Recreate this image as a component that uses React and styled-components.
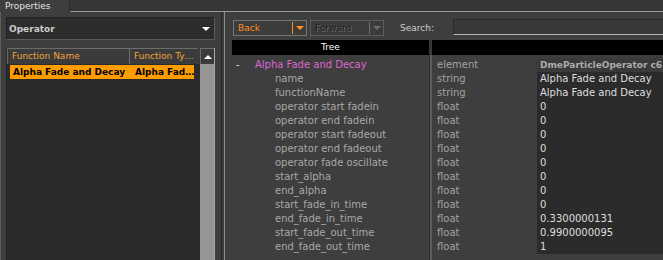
import React from "react";
import styled, { createGlobalStyle } from "styled-components";

const GlobalStyle = createGlobalStyle`
  html, body {
    margin: 0;
    padding: 0;
  }
  body {
    background: #3e3e3e;
    font-family: "DejaVu Sans", "Liberation Sans", sans-serif;
    font-size: 10px;
    overflow: hidden;
  }
`;

const Window = styled.div`
  width: 663px;
  height: 260px;
  display: flex;
  flex-direction: column;
  overflow: hidden;
  background: #3e3e3e;
`;

const TabBar = styled.div`
  display: flex;
  height: 12px;
  flex-shrink: 0;
  background: #363636;
`;

const Tab = styled.div`
  width: 70px;
  height: 12px;
  box-sizing: border-box;
  padding-left: 5px;
  border-right: 1px solid #2a2a2a;
  background: #3e3e3e;
  color: #e2e2e2;
  font-size: 9px;
  line-height: 12px;
`;

const TabFill = styled.div`
  flex: 1;
  border-bottom: 1px solid #9a9a9a;
`;

const Main = styled.div`
  flex: 1;
  display: flex;
  gap: 2px;
  min-height: 0;
`;

const LeftPanel = styled.div`
  width: 222px;
  box-sizing: border-box;
  display: flex;
  flex-direction: column;
  padding: 5px 6px 0 5px;
  border-left: 1px solid #5e5e5e;
  border-right: 1px solid #242424;
`;

const Dropdown = styled.div`
  height: 23px;
  box-sizing: border-box;
  display: flex;
  align-items: center;
  justify-content: space-between;
  padding: 0 4px 0 2px;
  border: 1px solid;
  border-color: #222 #5a5a5a #5a5a5a #222;
  background: #2d2d2d;
  color: #cbcbcb;
  font-size: 9px;
  font-weight: bold;
`;

const Caret = styled.span`
  width: 0;
  height: 0;
  border-left: 4px solid transparent;
  border-right: 4px solid transparent;
  border-top: 4px solid ${(p) => p.$color || "#fff"};
`;

const CaretUp = styled.span`
  width: 0;
  height: 0;
  border-left: 4px solid transparent;
  border-right: 4px solid transparent;
  border-bottom: 4px solid #fff;
`;

const ListBox = styled.div`
  flex: 1;
  margin-top: 8px;
  display: flex;
  border-left: 1px solid #262626;
  border-right: 1px solid #a8a8a8;
  background: #2b2b2b;
`;

const ListMain = styled.div`
  flex: 1;
  display: flex;
  flex-direction: column;
`;

const ListHeader = styled.div`
  display: flex;
  height: 16px;
  background: #3b3b3b;
`;

const HeaderCell = styled.div`
  width: ${(p) => p.$width}px;
  box-sizing: border-box;
  padding-left: 4px;
  border-left: 1px solid #6c6c6c;
  border-top: 1px solid #6c6c6c;
  color: #f0a23a;
  font-size: 9px;
  line-height: 15px;
  white-space: nowrap;
  overflow: hidden;
`;

const SelectedRow = styled.div`
  display: flex;
  height: 14px;
  margin: 1px 6px 0 3px;
  background: #ff9c00;
  color: #000;
  font-size: 9px;
  font-weight: bold;
  line-height: 14px;
`;

const RowCell = styled.div`
  width: ${(p) => (p.$width ? `${p.$width}px` : "auto")};
  flex: ${(p) => (p.$width ? "none" : 1)};
  box-sizing: border-box;
  padding-left: ${(p) => p.$pad}px;
  white-space: nowrap;
  overflow: hidden;
`;

const ScrollBar = styled.div`
  width: 16px;
  display: flex;
  flex-direction: column;
`;

const ScrollButton = styled.div`
  height: 16px;
  box-sizing: border-box;
  display: flex;
  align-items: center;
  justify-content: center;
  border-left: 1px solid #6c6c6c;
  border-top: 1px solid #6c6c6c;
  background: #3a3a3a;
`;

const ScrollTrack = styled.div`
  flex: 1;
  background: #959595;
`;

const RightPanel = styled.div`
  flex: 1;
  display: flex;
  flex-direction: column;
  border-left: 1px solid #8c8c8c;
  min-width: 0;
`;

const Toolbar = styled.div`
  height: 28px;
  box-sizing: border-box;
  display: flex;
  align-items: flex-start;
  padding: 8px 0 0 8px;
`;

const Combo = styled.div`
  width: 74px;
  height: 16px;
  box-sizing: border-box;
  display: flex;
  align-items: center;
  margin-left: ${(p) => (p.$first ? 0 : 3)}px;
  border: 1px solid ${(p) => (p.$disabled ? "#5c5c5c" : "#767676")};
  background: #3c3c3c;
`;

const ComboLabel = styled.span`
  flex: 1;
  padding-left: 4px;
  font-size: 9px;
  line-height: 14px;
  color: ${(p) => (p.$disabled ? "#1e1e1e" : "#ff8f1f")};
  text-shadow: ${(p) => (p.$disabled ? "1px 1px 0 #6a6a6a" : "none")};
`;

const ComboDivider = styled.span`
  width: 1px;
  height: 12px;
  background: ${(p) => (p.$disabled ? "#707070" : "#ff8f1f")};
`;

const ComboArrow = styled.span`
  width: 13px;
  display: flex;
  justify-content: center;
`;

const SearchLabel = styled.span`
  margin-left: 16px;
  color: #cdcdcd;
  font-size: 9px;
  line-height: 16px;
`;

const SearchInput = styled.div`
  flex: 1;
  height: 16px;
  box-sizing: border-box;
  margin: -1px 0 0 19px;
  border-top: 1px solid #2a2a2a;
  border-left: 1px solid #2a2a2a;
  border-bottom: 1px solid #b4b4b4;
  background: #383838;
`;

const Table = styled.div`
  flex: 1;
  display: flex;
  flex-direction: column;
  margin-left: 7px;
  min-height: 0;
`;

const TableHeader = styled.div`
  display: flex;
  height: 15px;
  flex-shrink: 0;
`;

const HeaderBlock = styled.div`
  width: ${(p) => (p.$width ? `${p.$width}px` : "auto")};
  flex: ${(p) => (p.$width ? "none" : 1)};
  background: #000;
  color: #fff;
  font-size: 9px;
  line-height: 15px;
  text-align: center;
`;

const HeaderGap = styled.div`
  width: 3px;
  background: #383838;
`;

const TableBody = styled.div`
  flex: 1;
  display: flex;
`;

const TreeColumn = styled.div`
  width: 197px;
  padding-top: 3px;
`;

const ColumnRule = styled.div`
  width: 2px;
  border-left: 1px solid #303030;
  background: #5c5c5c;
`;

const TreeRow = styled.div`
  height: 14px;
  display: flex;
  align-items: center;
  padding-left: ${(p) => p.$indent}px;
  line-height: 14px;
  white-space: nowrap;
  color: ${(p) => (p.$root ? "#de66d4" : "#a8a8a8")};
`;

const Expander = styled.span`
  width: 19px;
  color: #d8d8d8;
`;

const DataColumn = styled.div`
  flex: 1;
  display: grid;
  grid-template-columns: 105px 1fr;
  grid-auto-rows: 14px;
  align-content: start;
  padding-top: 3px;
  min-width: 0;
`;

const TypeCell = styled.div`
  padding-left: 5px;
  color: #a2a2a2;
  line-height: 14px;
  white-space: nowrap;
`;

const ValueCell = styled.div`
  padding-left: 3px;
  line-height: 14px;
  white-space: nowrap;
  overflow: hidden;
  background: ${(p) => (p.$element ? "#3a3a3a" : "#2b2b2b")};
  color: ${(p) => (p.$element ? "#ababab" : "#dedede")};
  font-size: ${(p) => (p.$element ? 9 : 10)}px;
  font-weight: ${(p) => (p.$element ? "bold" : "normal")};
`;

const attributes = [
  ["name", "string", "Alpha Fade and Decay"],
  ["functionName", "string", "Alpha Fade and Decay"],
  ["operator start fadein", "float", "0"],
  ["operator end fadein", "float", "0"],
  ["operator start fadeout", "float", "0"],
  ["operator end fadeout", "float", "0"],
  ["operator fade oscillate", "float", "0"],
  ["start_alpha", "float", "0"],
  ["end_alpha", "float", "0"],
  ["start_fade_in_time", "float", "0"],
  ["end_fade_in_time", "float", "0.3300000131"],
  ["start_fade_out_time", "float", "0.9900000095"],
  ["end_fade_out_time", "float", "1"],
];

export default function App() {
  return (
    <Window>
      <GlobalStyle />
      <TabBar>
        <Tab>Properties</Tab>
        <TabFill />
      </TabBar>
      <Main>
        <LeftPanel>
          <Dropdown>
            <span>Operator</span>
            <Caret />
          </Dropdown>
          <ListBox>
            <ListMain>
              <ListHeader>
                <HeaderCell $width={122}>Function Name</HeaderCell>
                <HeaderCell $width={69}>Function Ty…</HeaderCell>
              </ListHeader>
              <SelectedRow>
                <RowCell $width={119} $pad={3}>
                  Alpha Fade and Decay
                </RowCell>
                <RowCell $pad={6}>Alpha Fad…</RowCell>
              </SelectedRow>
            </ListMain>
            <ScrollBar>
              <ScrollButton>
                <CaretUp />
              </ScrollButton>
              <ScrollTrack />
            </ScrollBar>
          </ListBox>
        </LeftPanel>
        <RightPanel>
          <Toolbar>
            <Combo $first>
              <ComboLabel>Back</ComboLabel>
              <ComboDivider />
              <ComboArrow>
                <Caret $color="#ff8f1f" />
              </ComboArrow>
            </Combo>
            <Combo $disabled>
              <ComboLabel $disabled>Forward</ComboLabel>
              <ComboDivider $disabled />
              <ComboArrow>
                <Caret $color="#6e6e6e" />
              </ComboArrow>
            </Combo>
            <SearchLabel>Search:</SearchLabel>
            <SearchInput />
          </Toolbar>
          <Table>
            <TableHeader>
              <HeaderBlock $width={197}>Tree</HeaderBlock>
              <HeaderGap />
              <HeaderBlock />
            </TableHeader>
            <TableBody>
              <TreeColumn>
                <TreeRow $indent={4} $root>
                  <Expander>-</Expander>
                  Alpha Fade and Decay
                </TreeRow>
                {attributes.map(([name]) => (
                  <TreeRow key={name} $indent={43}>
                    {name}
                  </TreeRow>
                ))}
              </TreeColumn>
              <ColumnRule />
              <DataColumn>
                <TypeCell>element</TypeCell>
                <ValueCell $element>DmeParticleOperator c6</ValueCell>
                {attributes.map(([name, type, value]) => (
                  <React.Fragment key={name}>
                    <TypeCell>{type}</TypeCell>
                    <ValueCell>{value}</ValueCell>
                  </React.Fragment>
                ))}
              </DataColumn>
            </TableBody>
          </Table>
        </RightPanel>
      </Main>
    </Window>
  );
}
